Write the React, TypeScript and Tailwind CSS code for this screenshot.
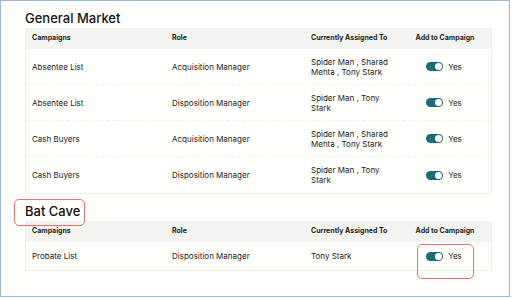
const general = [
  { campaign: "Absentee List", role: "Acquisition Manager", assigned: ["Spider Man , Sharad", "Mehta , Tony Stark"] },
  { campaign: "Absentee List", role: "Disposition Manager", assigned: ["Spider Man , Tony", "Stark"] },
  { campaign: "Cash Buyers", role: "Acquisition Manager", assigned: ["Spider Man , Sharad", "Mehta , Tony Stark"] },
  { campaign: "Cash Buyers", role: "Disposition Manager", assigned: ["Spider Man , Tony", "Stark"] },
];

const cols = "grid grid-cols-[140px_139px_94px_94px]";

function Toggle() {
  return (
    <div className="flex items-center gap-[5px]">
      <div className="w-[17px] h-[9px] rounded-full bg-[#1b6b78] flex items-center justify-end pr-[1px]">
        <div className="w-[7px] h-[7px] rounded-full bg-white" />
      </div>
      <span>Yes</span>
    </div>
  );
}

function Header() {
  return (
    <div className={`${cols} h-[21px] items-center bg-[#f3f3f0] text-[7px] font-bold text-[#1d1d1d]`}>
      <div className="pl-[6px]">Campaigns</div>
      <div className="pl-[6px]">Role</div>
      <div className="pl-[6px]">Currently Assigned To</div>
      <div className="text-center pr-[2px]">Add to Campaign</div>
    </div>
  );
}

function Row({ campaign, role, assigned, h, last }: { campaign: string; role: string; assigned: string[]; h: string; last?: boolean }) {
  return (
    <div className={`${cols} ${h} items-center text-[8px] text-[#222] ${last ? "" : "border-b border-dashed border-[#f0f0eb]"}`}>
      <div className="pl-[6px]">{campaign}</div>
      <div className="pl-[6px]">{role}</div>
      <div className="pl-[6px] leading-[10px]">
        {assigned.map((a) => (
          <div key={a}>{a}</div>
        ))}
      </div>
      <div className="flex justify-center pr-[4px]">
        <Toggle />
      </div>
    </div>
  );
}

export default function App() {
  return (
    <div
      className="relative w-[510px] h-[297px] border border-[#9ab7de] bg-[#fffffc] pl-[24px] pt-[8px]"
      style={{ fontFamily: "Inter, 'Noto Sans', sans-serif" }}
    >
      <h2 className="text-[13px] font-medium text-[#111] leading-[18px] mb-[1px]">General Market</h2>
      <div className="w-[467px] border-x border-b border-[#efefea]">
        <Header />
        {general.map((r, i) => (
          <Row key={i} {...r} h="h-[36px]" last={i === general.length - 1} />
        ))}
      </div>

      <h2 className="text-[13px] font-medium text-[#111] leading-[18px] mt-[8px] mb-[1px]">Bat Cave</h2>
      <div className="w-[467px] border-x border-b border-[#efefea]">
        <Header />
        <Row campaign="Probate List" role="Disposition Manager" assigned={["Tony Stark"]} h="h-[28px]" last />
      </div>

      <div className="absolute left-[13px] top-[198px] w-[71px] h-[27px] rounded-[5px] border border-[#f07070]" />
      <div className="absolute left-[416px] top-[243px] w-[57px] h-[35px] rounded-[5px] border border-[#f07070]" />
    </div>
  );
}
